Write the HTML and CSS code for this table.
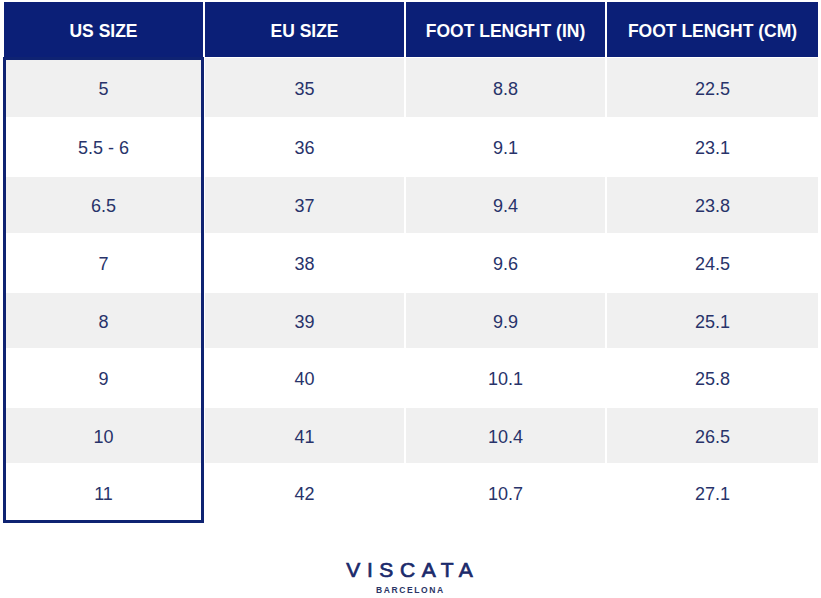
FILE: index.html
```html
<!DOCTYPE html>
<html lang="en">
<head>
<meta charset="utf-8">
<title>Size chart</title>
<link rel="stylesheet" href="styles.css">
</head>
<body>
<div class="page">
  <div class="chart">
    <div class="grid">
      <div class="hd">US SIZE</div><div class="hd">EU SIZE</div><div class="hd">FOOT LENGHT (IN)</div><div class="hd">FOOT LENGHT (CM)</div>
      <div class="c g">5</div><div class="c g">35</div><div class="c g">8.8</div><div class="c g">22.5</div>
      <div class="c">5.5 - 6</div><div class="c">36</div><div class="c">9.1</div><div class="c">23.1</div>
      <div class="c g">6.5</div><div class="c g">37</div><div class="c g">9.4</div><div class="c g">23.8</div>
      <div class="c">7</div><div class="c">38</div><div class="c">9.6</div><div class="c">24.5</div>
      <div class="c g">8</div><div class="c g">39</div><div class="c g">9.9</div><div class="c g">25.1</div>
      <div class="c">9</div><div class="c">40</div><div class="c">10.1</div><div class="c">25.8</div>
      <div class="c g">10</div><div class="c g">41</div><div class="c g">10.4</div><div class="c g">26.5</div>
      <div class="c">11</div><div class="c">42</div><div class="c">10.7</div><div class="c">27.1</div>
    </div>
    <div class="highlight"></div>
  </div>
  <div class="logo">
    <div class="brand">VISCATA</div>
    <div class="city">BARCELONA</div>
  </div>
</div>
</body>
</html>
```

FILE: styles.css
```css
* { box-sizing: border-box; }
html, body { margin: 0; padding: 0; background: #ffffff; }
body { font-family: "Liberation Sans", Arial, sans-serif; }
.page { width: 821px; height: 598px; overflow: hidden; padding: 2px 3px 0 4px; }
.chart { position: relative; width: 814px; }
.grid {
  display: grid;
  grid-template-columns: 199px 199px 199px 211px;
  grid-template-rows: 56px 59px 60px 56px 60px 55px 60px 55px 59px;
  column-gap: 2px;
}
.hd {
  background: #0b1f77;
  color: #ffffff;
  font-weight: 700;
  font-size: 17.5px;
  display: flex;
  align-items: center;
  justify-content: center;
  padding-top: 3px;
  margin-bottom: 1px;
}
.c {
  display: flex;
  align-items: center;
  justify-content: center;
  font-size: 18px;
  color: #28336a;
  background: #ffffff;
  padding-top: 3px;
}
.c.g { background: #f0f0f0; }
.highlight {
  position: absolute;
  left: -1px;
  top: 55px;
  width: 201px;
  height: 466px;
  border: 3px solid #0f2372;
  pointer-events: none;
}
.logo {
  margin-top: 37px;
  display: flex;
  flex-direction: column;
  align-items: center;
  color: #1b2a6b;
  padding-right: 3px;
}
.brand {
  font-size: 21px;
  line-height: 21px;
  letter-spacing: 6.6px;
  margin-right: -6.6px;
  font-weight: 400;
  -webkit-text-stroke: 0.7px #1b2a6b;
}
.city {
  margin-top: 6px;
  font-size: 8.5px;
  line-height: 8px;
  font-weight: 700;
  letter-spacing: 1.6px;
  margin-right: -1.6px;
  color: #2a3566;
}
```
